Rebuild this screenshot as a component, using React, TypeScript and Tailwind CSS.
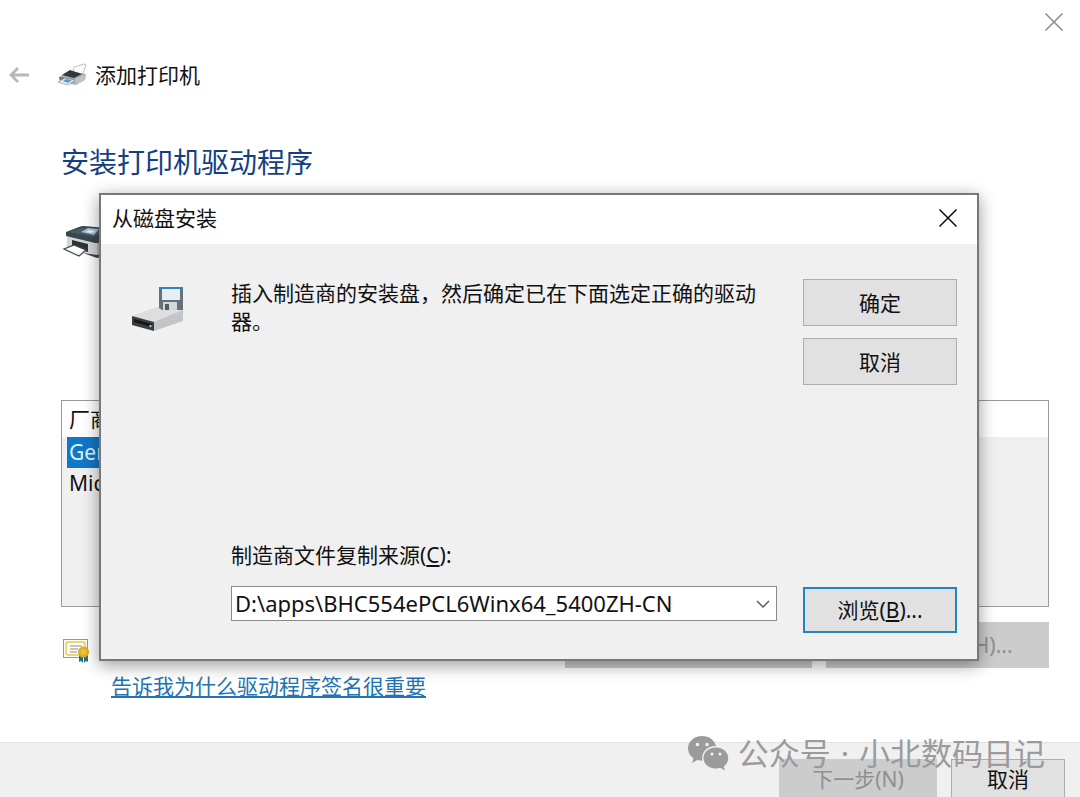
import type { ReactNode } from "react";

const MANUFACTURERS = [
  { name: "Generic", selected: true },
  { name: "Microsoft", selected: false },
];

export default function App() {
  return (
    <div className="relative flex h-screen flex-col overflow-hidden bg-white font-['Noto_Sans','Noto_Sans_CJK_SC',sans-serif] text-[21px] leading-7 text-[#111]">
      <div className="flex h-11 shrink-0 items-center justify-end pr-4">
        <button type="button" aria-label="关闭向导" className="text-[#8c8c8c]">
          <CloseIcon />
        </button>
      </div>

      <header className="flex h-[61px] shrink-0 items-center pl-2">
        <button type="button" aria-label="返回" className="mr-7 text-[#b8b8b8]">
          <BackIcon />
        </button>
        <PrinterIcon />
        <span className="ml-[7px]">添加打印机</span>
      </header>

      <main className="flex flex-1 flex-col pl-[61px] pr-[31px]">
        <h1 className="mt-[37px] text-[28px] leading-10 text-[#143f84]">安装打印机驱动程序</h1>
        <div className="mt-[42px]">
          <DeviceIcon />
        </div>

        <div className="mt-[142px] h-[207px] border border-[#9a9a9a] bg-[#f0f0f0]">
          <table className="w-full border-collapse text-left">
            <thead>
              <tr className="h-9 bg-white">
                <th className="w-1/2 pl-[7px] font-normal">厂商</th>
                <th className="font-normal">打印机</th>
              </tr>
            </thead>
            <tbody>
              {MANUFACTURERS.map((item) => (
                <tr key={item.name}>
                  <td className="pl-[5px]">
                    <div
                      className={[
                        "h-[31px] pl-0.5 leading-[31px]",
                        item.selected ? "bg-[#1177c8] text-[#dff6ff]" : "",
                      ].join(" ")}
                    >
                      {item.name}
                    </div>
                  </td>
                  <td />
                </tr>
              ))}
            </tbody>
          </table>
        </div>

        <div className="mt-[15px] flex h-[46px] items-end justify-between">
          <div className="mb-1 ml-0.5">
            <CertificateIcon />
          </div>
          <div className="flex gap-[14px]">
            <button type="button" disabled className="h-[46px] w-[247px] bg-[#cccccc] text-[#8f8f8f]">
              Windows 更新(<u>W</u>)
            </button>
            <button type="button" disabled className="h-[46px] w-[223px] bg-[#cccccc] text-[#8f8f8f]">
              从磁盘安装(H)...
            </button>
          </div>
        </div>
        <a href="#signing" className="ml-[50px] mt-1 self-start text-[#2173b4] underline underline-offset-2">
          告诉我为什么驱动程序签名很重要
        </a>
      </main>

      <footer className="flex h-[55px] shrink-0 items-start justify-end gap-[14px] border-t border-[#e3e3e3] bg-[#f0f0f0] pr-[15px] pt-4">
        <button type="button" disabled className="h-[46px] w-[158px] shrink-0 bg-[#cccccc] pb-1.5 text-[#8f8f8f]">
          下一步(N)
        </button>
        <button type="button" className="h-[46px] w-[114px] shrink-0 border border-[#adadad] bg-[#e1e1e1] pb-1.5">
          取消
        </button>
      </footer>

      <InstallFromDisk />

      <div className="pointer-events-none absolute bottom-[21px] right-[35px] flex items-center gap-[9px] text-[31px] leading-[46px] text-[#9b9b9b]">
        <WeChatIcon />
        <span className="flex gap-[10px]">
          <span>公众号</span>
          <span>·</span>
          <span>小北数码日记</span>
        </span>
      </div>
    </div>
  );
}

function InstallFromDisk() {
  return (
    <div
      role="dialog"
      aria-labelledby="disk-title"
      className="absolute left-[99px] right-[101px] top-[193px] border-2 border-[#76787a] bg-[#f0f0f0] shadow-[0_4px_16px_rgba(0,0,0,0.4)]"
    >
      <div className="flex h-[49px] items-center justify-between bg-white pb-[3px] pl-[11px] pr-[19px]">
        <h2 id="disk-title">从磁盘安装</h2>
        <button type="button" aria-label="关闭">
          <CloseIcon />
        </button>
      </div>

      <div className="pb-[26px] pr-5 pt-[35px]">
        <div className="flex items-start">
          <div className="w-[130px] shrink-0 pl-[31px] pt-[7px]">
            <FloppyDriveIcon />
          </div>
          <p className="mr-[26px] flex-1">插入制造商的安装盘，然后确定已在下面选定正确的驱动器。</p>
          <div className="flex w-[154px] flex-col gap-3">
            <DialogButton>确定</DialogButton>
            <DialogButton>取消</DialogButton>
          </div>
        </div>

        <div className="mt-[156px] flex items-end pl-[130px]">
          <div className="mr-[26px] flex-1 pb-3">
            <label htmlFor="source">
              制造商文件复制来源(<u>C</u>):
            </label>
            <div className="relative mt-[17px]">
              <select
                id="source"
                className="block h-[35px] w-full appearance-none border border-[#8a8a8a] bg-white pb-0.5 pl-[3px] pr-8 text-[22px]"
              >
                <option>D:\apps\BHC554ePCL6Winx64_5400ZH-CN</option>
              </select>
              <svg
                width="14"
                height="8"
                viewBox="0 0 14 8"
                fill="none"
                stroke="#555"
                strokeWidth="1.4"
                className="pointer-events-none absolute right-[7px] top-[14px]"
                aria-hidden="true"
              >
                <polyline points="1 1 7 7 13 1" />
              </svg>
            </div>
          </div>
          <button
            type="button"
            className="h-[46px] w-[154px] border-2 border-[#2384c4] bg-[#e1e1e1]"
          >
            浏览(<u>B</u>)...
          </button>
        </div>
      </div>
    </div>
  );
}

function DialogButton({ children }: { children: ReactNode }) {
  return (
    <button type="button" className="h-[47px] w-full border border-[#adadad] bg-[#e1e1e1]">
      {children}
    </button>
  );
}

function CloseIcon() {
  return (
    <svg width="20" height="20" viewBox="0 0 20 20" stroke="currentColor" strokeWidth="1.6" aria-hidden="true">
      <path d="M1.5 1.5 18.5 18.5M18.5 1.5 1.5 18.5" />
    </svg>
  );
}

function BackIcon() {
  return (
    <svg width="22" height="18" viewBox="0 0 22 18" fill="none" stroke="currentColor" strokeWidth="2.8" aria-hidden="true">
      <path d="M21 9H3M10 2 3 9l7 7" />
    </svg>
  );
}

function PrinterIcon() {
  return (
    <svg width="30" height="24" viewBox="0 0 30 24" aria-hidden="true">
      <path d="M15 9 16 4 26 1 28 2 24 13Z" fill="#fafafa" stroke="#b0b0b0" strokeWidth="0.8" />
      <path d="M1 14 11 8 28 11 27 17 18 22 2 19Z" fill="#a9acae" />
      <path d="M4 12 12 7 24 11 16 15Z" fill="#34383b" />
      <path d="M1 14 16 16 15 19 2 17Z" fill="#6b7073" />
      <path d="M17 16 28 11 27 17 18 22Z" fill="#c0c3c5" />
      <path d="M0 19 7 15 17 17 10 22Z" fill="#e5eef3" stroke="#8b989f" strokeWidth="0.7" />
      <path d="M5 18 8 16 14 17 10 20Z" fill="#5c9cc3" />
    </svg>
  );
}

function DeviceIcon() {
  return (
    <svg width="46" height="34" viewBox="0 0 46 34" aria-hidden="true">
      <path d="M6 11 36 19V31L33 32 6 24Z" fill="#d6d6d6" />
      <path d="M36 19 46 15V28L36 31Z" fill="#b5b7b8" />
      <path d="M22 29 36 31 46 28V31L36 34Z" fill="#3c4347" />
      <path d="M5 8 18 3Q20 2 23 2L46 4V14L37 19 34 19 5 12Z" fill="#39474f" />
      <path d="M8 8 21 4 45 6 33 13Z" fill="#4b5961" />
      <path d="M20 8 27 4 38 5 33 11Z" fill="#9ec4dc" />
      <path d="M25 8 28 6 34 7 31 9Z" fill="#e4f3fb" />
      <path d="M11 16 27 20V28L11 24Z" fill="#2d3336" />
      <path d="M3 25 13 21 25 26 18 32Z" fill="#fff" stroke="#3c4347" strokeWidth="1.2" />
    </svg>
  );
}

function CertificateIcon() {
  return (
    <svg width="28" height="26" viewBox="0 0 28 26" fill="none" aria-hidden="true">
      <rect x="0.5" y="1.5" width="24" height="18" fill="#fffef4" stroke="#a39a5c" />
      <rect x="3" y="4" width="19" height="13" rx="2" stroke="#e3cb48" strokeWidth="1.4" />
      <path d="M7 8h12M7 11h8M7 14h7" stroke="#8b8b96" />
      <path d="M16 17v7l2-1 2 2v-7ZM21 18v7l2-2 2 1v-7Z" fill="#26708c" />
      <circle cx="20.5" cy="14" r="5.5" fill="#e1ad20" />
      <circle cx="20.5" cy="14" r="3" fill="#edc33f" />
    </svg>
  );
}

function FloppyDriveIcon() {
  return (
    <svg width="52" height="46" viewBox="0 0 52 46" aria-hidden="true">
      <path d="M0 30 25 21 51 24 23 37Z" fill="#dedee1" />
      <path d="M27 1H51V24H30L27 22Z" fill="#66717a" />
      <rect x="30" y="2" width="18" height="12" fill="#e3eff5" />
      <rect x="27" y="1" width="24" height="2" fill="#2f86b4" />
      <rect x="31" y="16" width="14" height="8" fill="#d4d6d8" />
      <rect x="33" y="18" width="4" height="6" fill="#535c64" />
      <path d="M22 36 51 24V35L22 45Z" fill="#c4c5c9" />
      <path d="M0 30 22 36V45L0 39Z" fill="#3a3d3f" />
      <path d="M2 33 20 38V41L2 36Z" fill="#141617" />
      <circle cx="18.5" cy="40" r="1.2" fill="#9bdfa0" />
    </svg>
  );
}

function WeChatIcon() {
  return (
    <svg width="42" height="36" viewBox="0 0 42 36" aria-hidden="true">
      <path
        d="M15 1C7 1 1 6.500 1 13.500c0 4 2 7.500 5.500 9.700L5 28l5.500-3c1.500.4 3 .6 4.800.6C14 17 20 11 29 11 27.500 5 22 1 15 1Z"
        fill="currentColor"
      />
      <path
        d="M29 12.500c-7 0-12.500 4.600-12.500 10.500S22 33.500 29 33.500c1.500 0 3-.2 4.200-.7L38 35.500l-1.300-4c2.800-2 4.500-5 4.500-8.500 0-5.900-5.400-10.500-12.200-10.500Z"
        fill="currentColor"
      />
      <circle cx="10.500" cy="9.500" r="1.700" fill="#f4f4f4" />
      <circle cx="20" cy="9.500" r="1.700" fill="#f4f4f4" />
      <circle cx="25" cy="19" r="1.500" fill="#f4f4f4" />
      <circle cx="33" cy="19" r="1.500" fill="#f4f4f4" />
    </svg>
  );
}
